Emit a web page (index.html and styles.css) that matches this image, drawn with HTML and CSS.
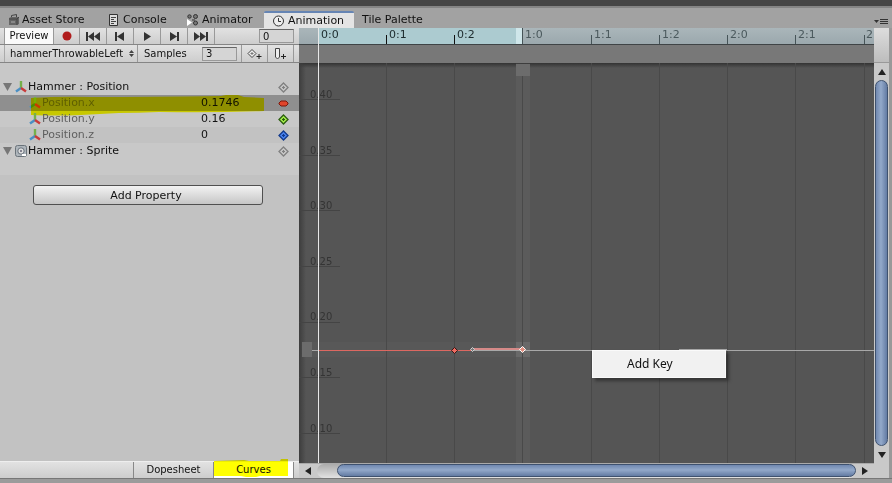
FILE: index.html
```html
<!DOCTYPE html>
<html lang="en">
<head>
<meta charset="utf-8">
<title>Animation</title>
<link rel="stylesheet" href="styles.css">
</head>
<body>
<svg class="defs" aria-hidden="true">
  <symbol id="axes" viewBox="0 0 12 12"><path d="M6 7V0" stroke="#76b04a" stroke-width="2.4"/><path d="M6 7L1 10.5" stroke="#4a8fc4" stroke-width="2.4"/><path d="M6 7l5 3.5" stroke="#c93a3a" stroke-width="2.4"/></symbol>
  <symbol id="key" viewBox="0 0 11 11"><path d="M5.5 1L10 5.5 5.5 10 1 5.5z" stroke-width="1.3"/><path d="M5.5 4v3M4 5.500h3" stroke-width="1.2"/></symbol>
</svg>
<div class="strip"></div>
<nav class="tabs">
  <button class="tab tab-store"><svg width="12" height="12" viewBox="0 0 12 12"><path d="M1 4l2-1h8v7l-2 1H1z" fill="#666"/><path d="M3.500 3V1.500l5-1V3M1 5h8v6M9 5l2-2" fill="none" stroke="#444"/><path d="M3 7h4v2H3z" fill="#888"/></svg>Asset Store</button>
  <button class="tab tab-console"><svg width="10" height="12" viewBox="0 0 10 12"><path d="M.5.5h8v11h-8z" fill="#ddd" stroke="#333"/><path d="M2 3.500h5M2 5.500h3M2 7.500h5M2 9.500h3" stroke="#444"/></svg>Console</button>
  <button class="tab tab-animator"><svg width="12" height="12" viewBox="0 0 12 12"><g fill="#777" stroke="#333"><circle cx="2.500" cy="2.500" r="1.700"/><circle cx="8.500" cy="2.500" r="2"/><circle cx="8.500" cy="9" r="2"/><path d="M5 6h3"/></g><path d="M0 5l5 3.500L0 12z" fill="#fff"/></svg>Animator</button>
  <button class="tab tab-animation active"><svg width="13" height="12" viewBox="0 0 13 12"><circle cx="6.500" cy="6" r="5" fill="#eee" stroke="#333"/><path d="M6.500 3v3.500H9" fill="none" stroke="#333"/></svg>Animation</button>
  <button class="tab">Tile Palette</button>
  <button class="pane-menu" aria-label="Pane options"><svg width="14" height="7" viewBox="0 0 14 7"><path d="M0 2h5L2.500 5z" fill="#333"/><path d="M6 1.500h8M6 3.500h8M6 5.500h8" stroke="#333"/></svg></button>
</nav>
<main class="window">
  <section class="side">
    <div class="bar transport">
      <button class="preview">Preview</button>
      <button class="tool" aria-label="Record"><svg width="12" height="12"><circle cx="6" cy="6" r="4.500" fill="#b01c1c"/></svg></button>
      <button class="tool" aria-label="First frame"><svg width="14" height="9"><path d="M0 0h2v9H0zM8 0v9L2 4.500zM14 0v9L8 4.500z"/></svg></button>
      <button class="tool" aria-label="Previous key"><svg width="10" height="9"><path d="M0 0h2v9H0zM9 0v9L2 4.500z"/></svg></button>
      <button class="tool" aria-label="Play"><svg width="8" height="9"><path d="M1 0l7 4.500L1 9z"/></svg></button>
      <button class="tool" aria-label="Next key"><svg width="10" height="9"><path d="M8 0h2v9H8zM1 0v9l7-4.500z"/></svg></button>
      <button class="tool" aria-label="Last frame"><svg width="14" height="9"><path d="M12 0h2v9h-2zM0 0v9l6-4.500zM6 0v9l6-4.500z"/></svg></button>
      <input class="field frame" aria-label="Frame" value="0">
    </div>
    <div class="bar clip">
      <select class="clip-select" aria-label="Clip"><option>hammerThrowableLeft</option></select>
      <svg class="updown" width="5" height="7"><path d="M0 3l2.500-3L5 3zM0 4h5L2.500 7z"/></svg>
      <label class="samples" for="samples">Samples</label>
      <input class="field" id="samples" value="3">
      <button class="tool first" aria-label="Add keyframe"><svg width="15" height="12"><path d="M5 1.500L9 5.500l-4 4-4-4z" fill="#eee" stroke="#444"/><path d="M5 4v3M3.500 5.500h3" stroke="#777"/><path d="M12 6v5M9.500 8.500h5" stroke="#222"/></svg></button>
      <button class="tool" aria-label="Add event"><svg width="13" height="12"><path d="M1.500.5h4V9l-2 2-2-2z" fill="#eee" stroke="#444"/><path d="M9.500 6v5M7 8.500h5" stroke="#222"/></svg></button>
    </div>
    <ul class="props">
      <li class="row"><svg class="fold" width="10" height="8"><path d="M0 0h9L4.500 8z"/></svg><svg class="ico" width="12" height="12"><use href="#axes"/></svg><span>Hammer : Position</span><svg class="key none" width="11" height="11"><use href="#key"/></svg></li>
      <li class="row child selected"><svg class="ico" width="12" height="12"><use href="#axes"/></svg><label for="px">Position.x</label><input id="px" value="0.1746"><svg class="key" width="11" height="11"><path d="M3 3h5l2 2v1L8 8H3L1 6V5z" fill="#e0452b" stroke="#7c180c"/></svg>
        <svg class="marker" width="234" height="19"><path d="M0 2q30-2 60-1 60 0 130-1l5-1h12l6 2 20 1v13q-50 2-105 1-20 1-40 1l-38 2q-25 1-50 0z" fill="#ff0"/></svg></li>
      <li class="row child"><svg class="ico" width="12" height="12"><use href="#axes"/></svg><label for="py">Position.y</label><input id="py" value="0.16"><svg class="key green" width="11" height="11"><use href="#key"/></svg></li>
      <li class="row child alt"><svg class="ico" width="12" height="12"><use href="#axes"/></svg><label for="pz">Position.z</label><input id="pz" value="0"><svg class="key blue" width="11" height="11"><use href="#key"/></svg></li>
      <li class="row"><svg class="fold" width="10" height="8"><path d="M0 0h9L4.500 8z"/></svg><svg class="ico" width="12" height="12"><rect x=".5" y=".5" width="11" height="11" rx="2" fill="#aeb5bb" stroke="#6a737a"/><circle cx="6" cy="6" r="3.200" fill="#ddd" stroke="#68727c"/><circle cx="6" cy="6" r="1" fill="#667"/><path d="M7 10h4" stroke="#fff" stroke-width="2"/></svg><span>Hammer : Sprite</span><svg class="key none" width="11" height="11"><use href="#key"/></svg></li>
    </ul>
    <div class="add-area"><button class="add">Add Property</button></div>
    <div class="bar modes">
      <button class="mode">Dopesheet</button>
      <button class="mode curves">Curves<svg class="ink" width="76" height="19" aria-hidden="true"><path d="M0 2l30-1 5 1h31l1-2h7v17H46l-4 1H32l-5-1H0z" fill="#ff0"/></svg></button>
    </div>
  </section>
  <section class="graph">
    <svg class="plot" role="img" aria-label="Curve editor">
      <defs>
        <linearGradient id="g1" x2="0" y2="1"><stop stop-color="#aab6ba"/><stop offset="1" stop-color="#9ba8ad"/></linearGradient>
        <linearGradient id="g3" x2="0" y2="1"><stop stop-color="#333"/><stop offset="1" stop-color="#333" stop-opacity="0"/></linearGradient>
        <linearGradient id="g4"><stop stop-color="#3d3d3d"/><stop offset="1" stop-color="#3d3d3d" stop-opacity="0"/></linearGradient>
      </defs>
      <rect width="100%" height="16" fill="url(#g1)"/>
      <rect x="19" width="198" height="16" fill="#accbd0"/><rect x="217" width="6" height="16" fill="#cfe6ea"/>
      <rect y="16" width="100%" height="19" fill="#787878"/>
      <path d="M0 16.500h2000" stroke="#3f4446"/>
      <rect y="35" width="100%" height="5" fill="url(#g3)"/><rect y="35" width="7" height="100%" fill="url(#g4)"/>
      <rect x="217" y="35" width="14" height="400" fill="#fff" opacity=".035"/>
      <rect x="217" y="36" width="14" height="12" fill="#6c6c6c"/>
      <rect x="3" y="314" width="10" height="15" fill="#6c6c6c"/>
      <rect x="13" y="314" width="218" height="15" fill="#fff" opacity=".02"/>
      <rect x="217" y="314" width="14" height="15" fill="#717171" opacity=".6"/>
      <path class="grid" d="M87.500 35v400M155.500 35v400M223.500 48v400M292.500 35v400M360.500 35v400M428.500 35v400M496.500 35v400M565.500 35v400"/>
      <path class="ticks" d="M87.500 7v9M155.500 7v9"/><path class="ticks dim" d="M223.500 0v16M292.500 7v9M360.500 7v9M428.500 7v9M496.500 7v9M565.500 7v9"/>
      <g class="time"><text x="22" y="10">0:0</text><text x="90" y="10">0:1</text><text x="158" y="10">0:2</text></g>
      <g class="time dim"><text x="226" y="10">1:0</text><text x="295" y="10">1:1</text><text x="363" y="10">1:2</text><text x="431" y="10">2:0</text><text x="499" y="10">2:1</text><text x="567" y="10">2</text></g>
      <path class="levels" d="M0 71.500h41M0 127.500h41M0 182.500h41M0 238.500h41M0 294.500h41M0 349.500h41M0 405.500h41"/>
      <g class="value"><text x="11" y="70">0.40</text><text x="11" y="126">0.35</text><text x="11" y="181">0.30</text><text x="11" y="237">0.25</text><text x="11" y="292">0.20</text><text x="11" y="348">0.15</text><text x="11" y="404">0.10</text></g>
      <path d="M13 322.500h2000M380 321.500h48" stroke="#a8a8a8"/>
      <path d="M20 322.500h153" stroke="#dd6861"/><path d="M173 321h50" stroke="#d58a88" stroke-width="2"/>
      <path d="M155.500 319.500l3 3-3 3-3-3z" fill="#ef6c62" stroke="#391615"/>
      <path d="M173.500 319.500l2 2-2 2-2-2z" fill="#777" stroke="#d5d5d5"/>
      <path d="M223.500 318.500l3 3-3 3-3-3z" fill="#e28f80" stroke="#fff"/>
      <path d="M19.500 0v435" stroke="#e8e8e8"/>
    </svg>
    <div class="popup" role="menu"><button role="menuitem">Add Key</button></div>
    <div class="vbar">
      <div class="corner"></div>
      <button aria-label="Scroll up"><svg width="8" height="6"><path d="M0 6l4-6 4 6z"/></svg></button>
      <div class="thumb"></div>
      <button aria-label="Scroll down"><svg width="8" height="6"><path d="M0 0h8L4 6z"/></svg></button>
    </div>
    <div class="hbar">
      <button aria-label="Scroll left"><svg width="6" height="8"><path d="M6 0v8L0 4z"/></svg></button>
      <div class="track"><div class="thumb"></div></div>
      <button aria-label="Scroll right"><svg width="6" height="8"><path d="M0 0v8l6-4z"/></svg></button>
    </div>
    <div class="nook"></div>
  </section>
</main>
<div class="foot"></div>
</body>
</html>
```
FILE: styles.css
```css
* { box-sizing: border-box; }
body {
  margin: 0;
  height: 100vh;
  display: flex;
  flex-direction: column;
  background: #a2a2a2;
  color: #111;
  font: 11px/16px "DejaVu Sans", sans-serif;
  overflow: hidden;
}
button, input, select { font: inherit; color: inherit; margin: 0; padding: 0; border: 0; background: none; border-radius: 0; }
button { display: flex; align-items: center; justify-content: center; }
svg { flex: none; display: block; }
.defs { position: absolute; width: 0; height: 0; }
.strip { height: 8px; background: #464646; border-bottom: 2px solid #858585; flex: none; }
.foot { height: 5px; background: #9b9b9b; border-top: 1px solid #777; flex: none; }

.tabs { display: flex; align-items: flex-end; height: 20px; padding-left: 4px; flex: none; }
.tab { height: 17px; padding: 0 8px 0 4px; gap: 4px; justify-content: flex-start; white-space: nowrap; }
.tab:nth-child(5) { padding-left: 8px; }
.tab-store { width: 101px; gap: 2px; }
.tab-console { width: 78px; }
.tab-animator { width: 81px; gap: 3px; }
.tab-animation { width: 90px; padding-left: 8px; gap: 3px; }
.tab.active { background: #e4e4e4; border-top: 2px solid #6685b4; border-radius: 2px 2px 0 0; padding-right: 0; }
.pane-menu { margin: 0 4px 3px auto; }

.window { flex: 1; display: flex; min-height: 0; border-right: 3px solid #999; }
.side { width: 299px; flex: none; display: flex; flex-direction: column; background: #c2c2c2; }
.bar { display: flex; align-items: stretch; background: linear-gradient(#e2e2e2, #cdcdcd); border-bottom: 1px solid #858585; flex: none; font-size: 10px; }
.transport { height: 17px; padding-left: 4px; }
.preview { width: 49px; background: #fafafa; border-left: 1px solid #999; }
.tool { width: 27px; border-left: 1px solid #999; fill: #333; }
.transport .tool:nth-child(2) { width: 26px; }
.transport .tool:nth-child(7) { width: 28px; border-right: 1px solid #999; }
.field { width: 35px; height: 14px; align-self: center; padding: 0 3px; background: #d5d5d5; border: 1px solid #999; border-top-color: #666; line-height: 12px; }
.frame { margin: 0 5px 0 auto; }
.clip { height: 18px; padding-left: 4px; }
.clip-select { appearance: none; width: 125px; padding-left: 5px; border-left: 1px solid #aaa; white-space: nowrap; }
.updown { align-self: center; margin-right: 3px; fill: #444; }
.samples { width: 65px; padding-left: 6px; border-left: 1px solid #999; line-height: 18px; }
.clip .tool.first { margin-left: 4px; width: 26px; }
.clip .tool:last-child { border-right: 1px solid #999; width: 27px; }

.props { list-style: none; margin: 0; padding: 16px 0; background: #c8c8c8; }
.row { height: 16px; display: flex; align-items: center; position: relative; padding: 0 10px 0 3px; line-height: 18px; }
.row span, .row label { flex: 1; padding-left: 1px; }
.child { padding-left: 29px; }
.child label { color: #5f5f5f; }
.row input { width: 77px; height: 16px; padding-bottom: 2px; line-height: 14px; }
.alt { background: #c2c2c2; }
.selected { background: #8f8f8f; }
.fold { fill: #777; margin-right: 2px; }
.ico { fill: none; }
.key { fill: none; }
.key.none { stroke: #808080; }
.key.green { fill: #a5f04a; stroke: #2b5d10; }
.key.blue { fill: #4a83f0; stroke: #123a8c; }
.marker { position: absolute; left: 31px; top: 1px; mix-blend-mode: multiply; pointer-events: none; overflow: visible; }
.add-area { flex: 1; padding: 10px 36px 0 33px; }
.add { width: 100%; height: 20px; padding: 2px 4px 0 0; border: 1px solid #505050; border-radius: 3px; background: linear-gradient(#f3f3f3, #c6c6c6); }
.modes { height: 17px; justify-content: flex-end; padding-right: 5px; border-top: 1px solid #eee; border-bottom: 0; }
.mode { width: 80px; border-left: 1px solid #888; }
.mode.curves { width: 81px; position: relative; border-right: 1px solid #888; background: #fff; }
.ink { position: absolute; left: 0; top: -3px; mix-blend-mode: multiply; }

.graph { flex: 1; min-width: 0; display: grid; grid-template-columns: minmax(0, 1fr) 15px; grid-template-rows: minmax(0, 1fr) 15px; position: relative; background: #555; }
.plot { width: 100%; height: 100%; overflow: hidden; font-size: 10px; }
.grid { stroke: #494949; }
.ticks { stroke: #111; }
.ticks.dim { stroke: #465458; }
.time { fill: #1c2a2c; font-size: 11px; }
.time.dim { fill: #4b595d; }
.levels { stroke: #444; }
.value { fill: #343434; }
.vbar { display: flex; flex-direction: column; align-items: center; background: #c9c9c9; }
.corner { width: 100%; height: 35px; background: linear-gradient(#ddd, #bdbdbd); border-bottom: 1px solid #999; }
.vbar button { width: 100%; height: 17px; fill: #222; }
.thumb { border: 1px solid #3f526f; border-radius: 7px; background: linear-gradient(90deg, #7088b0, #93a9ca 45%, #637ba3); }
.vbar .thumb { flex: 1; width: 13px; }
.hbar { display: flex; background: #c9c9c9; border-top: 1px solid #aaa; }
.hbar button { width: 18px; fill: #222; }
.track { flex: 1; padding-left: 20px; border-radius: 7px; background: linear-gradient(#aaa, #e2e2e2); }
.hbar .thumb { height: 13px; background: linear-gradient(#7088b0, #93a9ca 45%, #637ba3); }
.nook { background: #c9c9c9; }
.popup { position: absolute; left: 293px; top: 322px; width: 134px; padding: 2px; background: #f1f1f1; border: 1px solid #fafafa; box-shadow: 3px 3px 3px #2229; }
.popup button { width: 100%; height: 22px; padding-left: 32px; justify-content: flex-start; font: 12px/16px "Noto Sans", sans-serif; }
```
